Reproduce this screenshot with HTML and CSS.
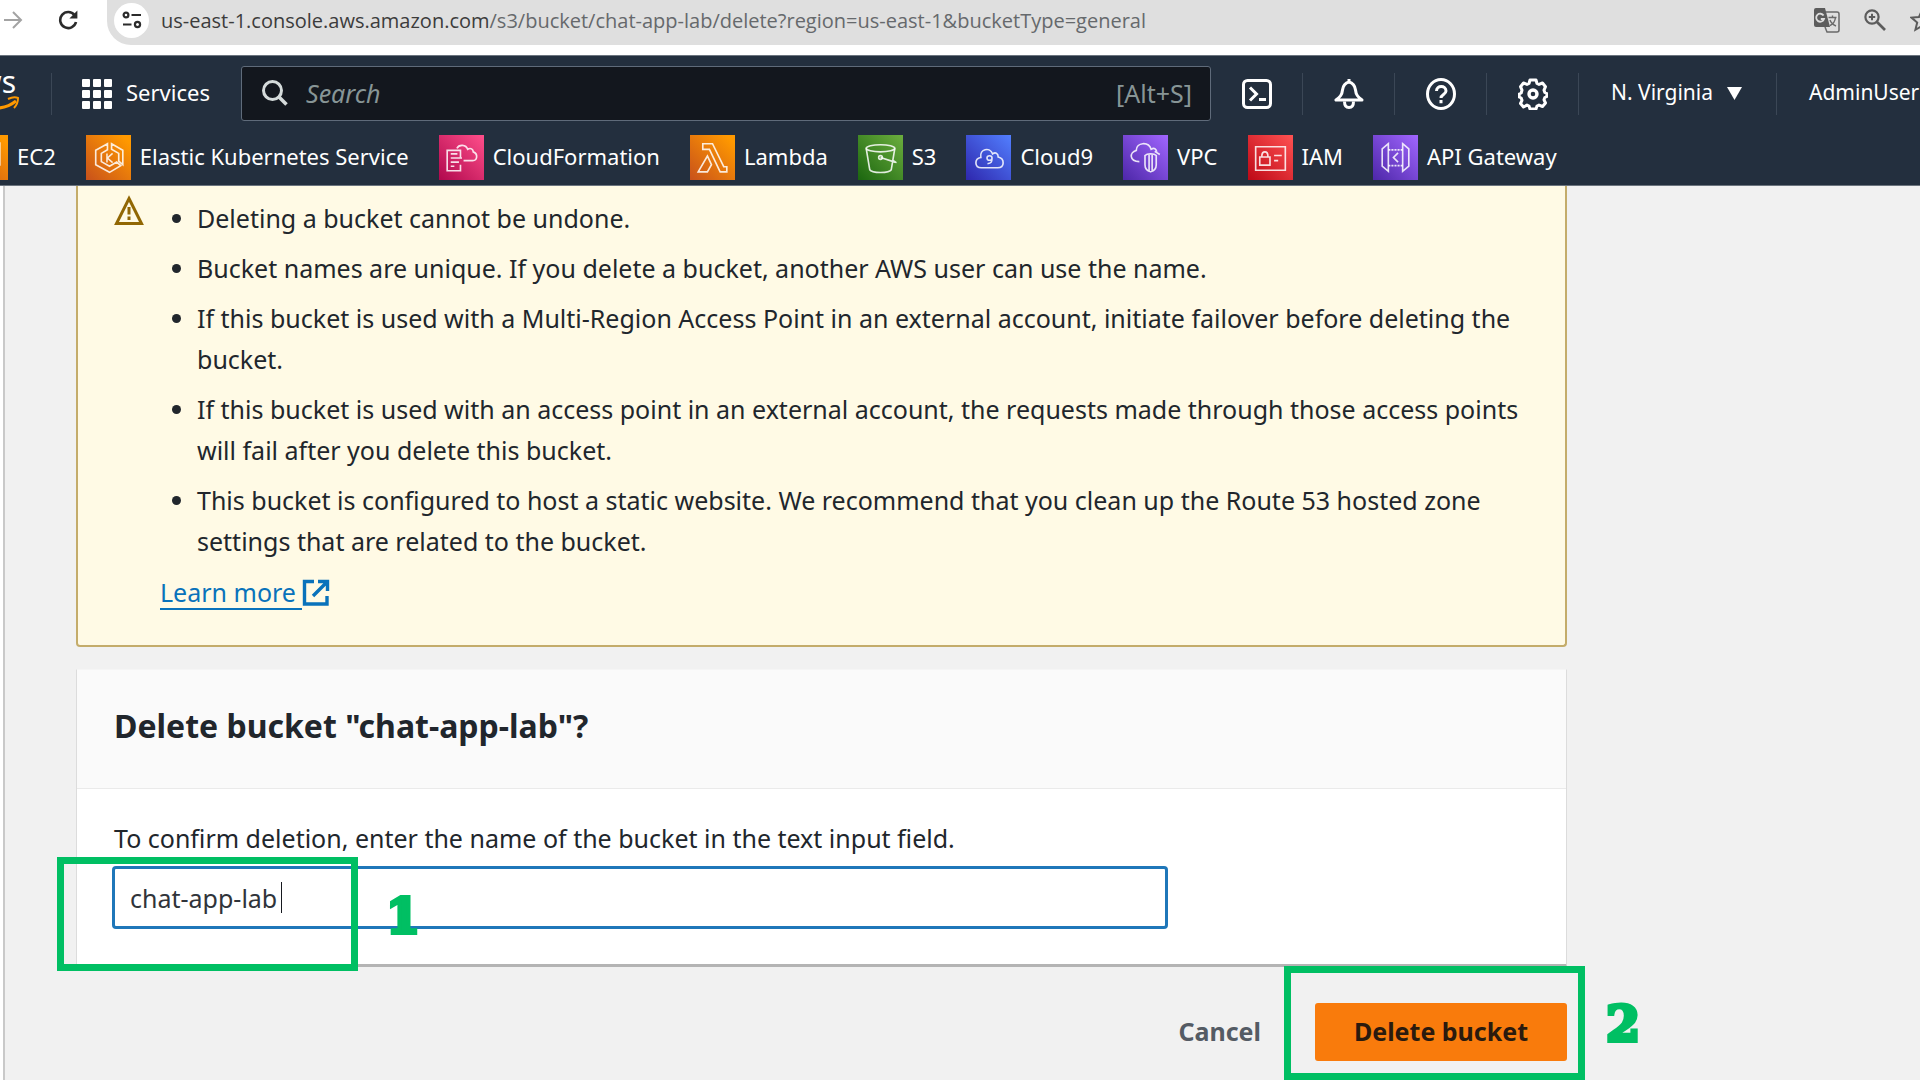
FILE: index.html
```
<!DOCTYPE html>
<html lang="en">
<head>
<meta charset="utf-8">
<title>Delete bucket - S3</title>
<link rel="stylesheet" href="styles.css">
</head>
<body>
<div class="browser-bar">
  <button class="browser-btn forward" aria-label="Forward">
    <svg width="20" height="20" viewBox="0 0 20 20" fill="none" stroke="#a3a3a3" stroke-width="2"><path d="M1 10h16M10 2l8 8-8 8"/></svg>
  </button>
  <button class="browser-btn reload" aria-label="Reload">
    <svg width="20" height="20" viewBox="0 0 20 20"><path d="M16.6 5.2A8 8 0 1 0 18 12" fill="none" stroke="#2b2b2b" stroke-width="2.6"/><path d="M19.4 0.600v8h-8z" fill="#2b2b2b"/></svg>
  </button>
  <div class="omnibox">
    <button class="site-info" aria-label="Site information">
      <svg width="20" height="18" viewBox="0 0 20 18" fill="none" stroke="#2b2b2b" stroke-width="2.200"><circle cx="4" cy="4" r="2.400"/><path d="M9.500 4H19M1 13.500h8.500"/><circle cx="15.500" cy="13.500" r="2.600"/></svg>
    </button>
    <div class="url"><span class="url-host">us-east-1.console.aws.amazon.com</span>/s3/bucket/chat-app-lab/delete?region=us-east-1&amp;bucketType=general</div>
    <div class="omnibox-tools">
      <button class="browser-btn" aria-label="Translate">
        <svg width="26" height="26" viewBox="0 0 26 26"><path d="M2 1h9l5 19H2a2 2 0 0 1-2-2V3a2 2 0 0 1 2-2z" fill="#5c5c5c"/><path d="M12 5h11a2 2 0 0 1 2 2v16a2 2 0 0 1-2 2H13l-2-5" fill="none" stroke="#6a6a6a" stroke-width="1.500"/><path d="M9.600 8.600A4 4 0 1 0 10 12H6.800" fill="none" stroke="#dedede" stroke-width="1.800"/><path d="M14.500 10.500h8M18.500 8.500v2M21.500 10.500c-.5 4-3 7-5.500 8M16 13c1 3 3.500 5 6 6" fill="none" stroke="#6a6a6a" stroke-width="1.400"/></svg>
      </button>
      <button class="browser-btn" aria-label="Zoom">
        <svg width="22" height="22" viewBox="0 0 22 22" fill="none" stroke="#5c5c5c"><circle cx="8" cy="8" r="6.600" stroke-width="2.200"/><path d="M13 13l8 8" stroke-width="2.600"/><path d="M8 4.800v6.400M4.800 8h6.400" stroke-width="2"/></svg>
      </button>
      <button class="browser-btn" aria-label="Bookmark">
        <svg width="24" height="24" viewBox="0 0 24 24" fill="none" stroke="#5c5c5c" stroke-width="2"><path d="M12 2l3 7 7.500.600-5.700 4.900 1.800 7.300L12 18l-6.600 3.800 1.800-7.300L1.500 9.600 9 9z"/></svg>
      </button>
    </div>
  </div>
</div>

<header class="nav">
  <div class="nav-main">
    <a class="logo" href="#" aria-label="AWS home">
      <svg width="20" height="40" viewBox="0 0 20 40"><text class="logo-text" x="16" y="20" text-anchor="end">aws</text><path d="M-20 30C-8 38 6 36 16 28" fill="none" stroke="#f90" stroke-width="3"/><path d="M8 26c4-2 8-2 10-1 0 3-1 7-4 10" fill="none" stroke="#f90" stroke-width="2"/></svg>
    </a>
    <button class="services">
      <svg width="30" height="30" viewBox="0 0 30 30" fill="#fff"><rect width="8" height="8" rx="1"/><rect x="11" width="8" height="8" rx="1"/><rect x="22" width="8" height="8" rx="1"/><rect y="11" width="8" height="8" rx="1"/><rect x="11" y="11" width="8" height="8" rx="1"/><rect x="22" y="11" width="8" height="8" rx="1"/><rect y="22" width="8" height="8" rx="1"/><rect x="11" y="22" width="8" height="8" rx="1"/><rect x="22" y="22" width="8" height="8" rx="1"/></svg>
      <span>Services</span>
    </button>
    <div class="search">
      <svg width="26" height="26" viewBox="0 0 26 26" fill="none" stroke="#d5dbdb" stroke-width="3"><circle cx="10.500" cy="10.500" r="9"/><path d="M17 17l7.500 7.500" stroke-width="3.600"/></svg>
      <input class="search-input" type="text" placeholder="Search" aria-label="Search">
      <span class="search-hint">[Alt+S]</span>
    </div>
    <button class="nav-tool" aria-label="CloudShell">
      <svg width="30" height="30" viewBox="0 0 30 30" fill="none" stroke="#fff" stroke-width="3"><rect x="1.500" y="1.500" width="27" height="27" rx="4"/><path d="M8 8.500l6.500 6.500L8 21.500M17 20.500h7"/></svg>
    </button>
    <button class="nav-tool" aria-label="Notifications">
      <svg width="30" height="32" viewBox="0 0 30 32" fill="none" stroke="#fff" stroke-width="3" stroke-linejoin="round"><path d="M15 4c-4 1-6 4-6.500 8-.5 5-2.500 7-6.500 10h26c-4-3-6-5-6.500-10-.5-4-2.500-7-6.500-8zM15 1v4"/><path d="M10.500 23.500c0 4 2 6 4.500 6s4.500-2 4.500-6"/></svg>
    </button>
    <button class="nav-tool" aria-label="Help">
      <svg width="30" height="32" viewBox="0 0 30 32" fill="none" stroke="#fff" stroke-width="3"><ellipse cx="15" cy="16" rx="13.500" ry="14.500"/><path d="M10.500 13c0-6 9.500-6 9.500 0 0 3.500-5 3.500-5 7M15 22v3.200"/></svg>
    </button>
    <button class="nav-tool" aria-label="Settings">
      <svg width="30" height="32" viewBox="0 0 30 32" fill="none" stroke="#fff" stroke-width="3" stroke-linejoin="round"><path d="M12 2h6l1 3.500 2 .9L24.500 5l3 3.700-1.500 3.500.8 2.300 2 1v3l-2 1-.8 2.300 1.500 3.200-3 3.500-3.500-1.400-2 .9-1 3h-6l-1-3-2-.9L5.500 29l-3-3.500L4 22.300 3.200 20l-2-1v-3l2-1 .8-2.800-1.500-3.500 3-3.700L9 6.400l2-.9z"/><circle cx="15" cy="16" r="4" stroke-width="3.400"/></svg>
    </button>
    <button class="nav-menu"><span>N. Virginia</span> <svg width="15" height="13" viewBox="0 0 15 13"><path d="M0 0h15l-7.500 13z" fill="#fff"/></svg></button>
    <button class="nav-menu user"><span>AdminUser</span></button>
  </div>
  <nav class="shortcuts">
    <a class="shortcut" href="#"><svg class="tile orange" viewBox="0 0 44 44"><path d="M8 14h22v22H8zM14 8h22v22"/></svg><span>EC2</span></a>
    <a class="shortcut" href="#"><svg class="tile orange" viewBox="0 0 44 44"><path d="M21 8.500L9.500 15v14L23 36.500 34 30l-4-3.500-7 4-8-4.500v-8l6-3.500zM25 8.500L36 15v14l-4-3.500V18l-7-4z"/><path d="M20.500 18v9M26 18l-5 4.500 5 4.500" stroke-width="1.500"/></svg><span>Elastic Kubernetes Service</span></a>
    <a class="shortcut" href="#"><svg class="tile pink" viewBox="0 0 44 44"><path d="M21 22v-7H8v20h13v-6"/><path d="M11.500 18.500H18M11.500 22.500h11M11.500 26.500h8M11.500 30.500H15"/><path d="M17.500 13c2-4 9-4 10.500 1 3-2 5.500 0 5.500 2.500 5 2 4 8.500-.5 8.500h-9"/></svg><span>CloudFormation</span></a>
    <a class="shortcut" href="#"><svg class="tile orange" viewBox="0 0 44 44"><path d="M12.500 8.500H22L33 31h3v5h-6.500L19 14h-6.500zM17 20.500l4 8.500-4 7H8z"/></svg><span>Lambda</span></a>
    <a class="shortcut" href="#"><svg class="tile green" viewBox="0 0 44 44"><ellipse cx="22" cy="13" rx="14" ry="3.500"/><path d="M8 13l3.500 21c2 3.500 19 3.500 21 0L36 13M22 22l14 4.500c2 .5 1 .5-1.500-1.500"/><circle cx="22" cy="22" r="1.800"/></svg><span>S3</span></a>
    <a class="shortcut" href="#"><svg class="tile blue" viewBox="0 0 44 44"><path d="M15 32h16c7 0 7-9 .5-10.500 0-4-3-5-5.500-3-2.500-7-13-5-11.500 3.500C8 23 8 32 15 32z"/><path d="M25.500 22.500c0 3-5 3-5 0s5-3 5 0c0 4-1 5-4.500 5.500" stroke-width="1.500"/></svg><span>Cloud9</span></a>
    <a class="shortcut" href="#"><svg class="tile purple" viewBox="0 0 44 44"><path d="M16 26c-10 0-10-9-3-11 0-8 12-9 14.500-1 3-2 5-.5 5.500 2.500M31 16l5 3"/><path d="M27 18.500c-3 0-5 1-5.500 1.500v9c0 4 2 6 5.500 7 3.500-1 5.500-3 5.500-7v-9c-.5-.5-2.500-1.500-5.500-1.500zM25.500 19v17M28.500 19v17"/></svg><span>VPC</span></a>
    <a class="shortcut" href="#"><svg class="tile red" viewBox="0 0 44 44"><path d="M7.500 11.500h29v23h-29zM11.500 21.500h10v8h-10zM13.500 21c0-6 6-6 6 0M25.500 20h7.500M25.500 25h4"/></svg><span>IAM</span></a>
    <a class="shortcut" href="#"><svg class="tile purple" viewBox="0 0 44 44"><path d="M15 8.500l-6 5v17l6 5zM29 8.500l6 5v17l-6 5zM24.500 17.500L20 22l4.500 4.500"/><path d="M15 14.500h14M15 30h14" stroke-dasharray="2 1"/></svg><span>API Gateway</span></a>
  </nav>
</header>

<main class="page">
  <section class="alert">
    <svg class="alert-icon" width="30" height="31" viewBox="0 0 30 31" fill="none" stroke="#916704" stroke-width="3"><path d="M15 3.500L27.500 28.500h-25z"/><path d="M15 12v7.500M15 21.500v3.500"/></svg>
    <div class="alert-body">
      <ul class="alert-list">
        <li>Deleting a bucket cannot be undone.</li>
        <li>Bucket names are unique. If you delete a bucket, another AWS user can use the name.</li>
        <li>If this bucket is used with a Multi-Region Access Point in an external account, initiate failover before deleting the bucket.</li>
        <li>If this bucket is used with an access point in an external account, the requests made through those access points will fail after you delete this bucket.</li>
        <li>This bucket is configured to host a static website. We recommend that you clean up the Route 53 hosted zone settings that are related to the bucket.</li>
      </ul>
      <a class="learn-more" href="#"><span>Learn more&nbsp;</span><svg width="28" height="28" viewBox="0 0 28 28" fill="none" stroke="#0972bb" stroke-width="3.400"><path d="M12 2.500H2.500v22.500h22.500V17M16 2.500h9.500V12M25 3L11 17"/></svg></a>
    </div>
  </section>

  <form class="card">
    <h2 class="card-title">Delete bucket "chat-app-lab"?</h2>
    <div class="card-body">
      <label class="field-label" for="bucket-name">To confirm deletion, enter the name of the bucket in the text input field.</label>
      <div class="field">
        <input class="field-input" id="bucket-name" type="text" value="chat-app-lab">
        <span class="caret"></span>
        <span class="callout callout-1"></span>
        <span class="step step-1">1</span>
      </div>
    </div>
  </form>

  <div class="actions">
    <button class="btn-link">Cancel</button>
    <div class="primary-wrap">
      <button class="btn-primary">Delete bucket</button>
      <span class="callout callout-2"></span>
      <span class="step step-2">2</span>
    </div>
  </div>
</main>
</body>
</html>
```
FILE: styles.css
```
* { box-sizing: border-box; }

body {
  margin: 0;
  min-height: 100vh;
  display: flex;
  flex-direction: column;
  overflow: hidden;
  background: #f1f1f1;
  color: #21262c;
  font-family: "Noto Sans", "Open Sans", sans-serif;
  font-size: 25px;
}

button {
  padding: 0;
  border: 0;
  background: none;
  color: inherit;
  font: inherit;
  white-space: nowrap;
}

svg { display: block; flex: none; }

/* Browser toolbar */
.browser-bar {
  display: flex;
  align-items: flex-start;
  height: 55px;
  padding-left: 3px;
  background: #fff;
}

.browser-btn { display: flex; align-items: center; height: 40px; }
.reload { margin: 0 29px 0 35px; }

.omnibox {
  flex: 1;
  min-width: 0;
  display: flex;
  align-items: center;
  height: 45px;
  padding: 0 0 5px 7px;
  border-bottom-left-radius: 24px;
  background: #dfdfdf;
}

.site-info {
  display: flex;
  align-items: center;
  justify-content: center;
  width: 35px;
  height: 35px;
  border-radius: 50%;
  background: #fff;
}

.url {
  flex: 1;
  margin-left: 12px;
  color: #66696c;
  font-family: "Open Sans", sans-serif;
  font-size: 20px;
  white-space: nowrap;
}

.url-host { color: #3c3c3c; }

.omnibox-tools { display: flex; gap: 24px; margin-right: -14px; }

/* Console navigation */
.nav {
  height: 131px;
  border-top: 1px solid #6b747e;
  border-bottom: 1px solid #6b747e;
  background: #232f3e;
  color: #fff;
  font-size: 22px;
}

.nav-main { display: flex; align-items: center; height: 75px; }

.logo {
  width: 52px;
  height: 42px;
  border-right: 1px solid #3b4756;
}

.logo-text { fill: #fff; font-size: 30px; }

.services {
  display: flex;
  align-items: center;
  gap: 14px;
  width: 189px;
  padding-left: 30px;
}

.services span,
.nav-menu span,
.shortcut span { padding-bottom: 3px; }

.search {
  flex: 1;
  min-width: 0;
  display: flex;
  align-items: center;
  gap: 18px;
  height: 55px;
  padding: 0 18px 2px 20px;
  border: 1px solid #5f6b7a;
  border-radius: 3px;
  background: #13171e;
}

.search-input {
  flex: 1;
  min-width: 0;
  padding: 0;
  border: 0;
  background: none;
  color: #fff;
  font: inherit;
  font-size: 25px;
}

.search-input::placeholder { color: #879596; font-style: italic; opacity: 1; }
.search-hint { color: #879596; font-size: 25px; }

.nav-tool {
  display: flex;
  align-items: center;
  justify-content: center;
  width: 92px;
  height: 42px;
  border-right: 1px solid #3b4756;
}

.nav-menu {
  display: flex;
  align-items: center;
  justify-content: space-between;
  width: 198px;
  height: 42px;
  padding: 0 34px 0 32px;
  border-right: 1px solid #3b4756;
  font-size: 21px;
}

.user { width: 143px; padding-right: 0; border: 0; overflow: hidden; }

.shortcuts { display: flex; gap: 30px; padding-top: 4px; margin-left: -37px; }

.shortcut {
  display: flex;
  align-items: center;
  gap: 9px;
  color: #fff;
  text-decoration: none;
  white-space: nowrap;
}

.tile {
  width: 45px;
  height: 45px;
  fill: none;
  stroke: #fff;
  stroke-opacity: 0.85;
  stroke-width: 1.6;
}

.orange { background: linear-gradient(45deg, #c8511b, #f90 90%); }
.pink { background: linear-gradient(45deg, #b0084d, #ff4f8b); }
.green { background: linear-gradient(45deg, #1b660f, #6cae3e); }
.blue { background: linear-gradient(45deg, #2e27ad, #527fff); }
.purple { background: linear-gradient(45deg, #4d27a8, #a166ff); }
.red { background: linear-gradient(45deg, #bd0816, #ff5252); }

/* Page */
.page {
  flex: 1;
  padding-left: 73px;
  border-left: 3px solid #fff;
  box-shadow: inset 2px 0 0 #c9c9c9;
}

.alert,
.card,
.actions { max-width: 1491px; }

.alert {
  display: flex;
  gap: 16px;
  padding: 9px 36px 32px;
  border: 2px solid #c4ac6a;
  border-top: 0;
  border-radius: 0 0 4px 4px;
  background: #fffae5;
}

.alert-body { padding-top: 3px; line-height: 41px; }

.alert-list {
  display: grid;
  gap: 9px;
  margin: 0 0 10px;
  padding-left: 37px;
}

.learn-more {
  display: flex;
  align-items: center;
  height: 41px;
  color: #0972bb;
  text-decoration: none;
}

.learn-more span { border-bottom: 2px solid #0972bb; line-height: 32px; }

.card {
  margin-top: 22px;
  border: 1px solid #dcdcdc;
  border-top-color: #f5f5f5;
  border-bottom: 3px solid #b4b4b4;
  background: #fff;
}

.card-title {
  margin: 0;
  padding: 36px 37px 42px;
  border-bottom: 1px solid #eaeaea;
  background: #fafafa;
  font-size: 32px;
  line-height: 40px;
}

.card-body { padding: 29px 35px 35px; }

.field-label { display: block; padding-left: 2px; line-height: 41px; }

.field { position: relative; max-width: 1056px; margin-top: 7px; }

.field-input {
  display: block;
  width: 100%;
  height: 63px;
  padding: 0 15px;
  border: 3px solid #1f77b9;
  border-radius: 4px;
  background: #fff;
  color: #30343a;
  font: inherit;
  outline: 0;
}

.caret {
  position: absolute;
  top: 16px;
  left: 169px;
  width: 1px;
  height: 31px;
  background: #16191f;
}

.actions {
  display: flex;
  align-items: center;
  justify-content: flex-end;
  gap: 54px;
  padding-top: 36px;
  font-weight: 700;
}

.btn-link { padding-bottom: 3px; color: #545b64; }

.primary-wrap { position: relative; }

.btn-primary {
  width: 252px;
  height: 58px;
  padding-bottom: 3px;
  border-radius: 3px;
  background: #f97b0c;
  color: #2b1a0e;
}

/* Numbered step callouts laid over the page */
.callout {
  position: absolute;
  width: 301px;
  height: 114px;
  border: 7px solid #00bf63;
  pointer-events: none;
}

.callout-1 { top: -9px; left: -55px; }
.callout-2 { top: -37px; left: -31px; }

.step {
  position: absolute;
  color: #00bf63;
  font-family: "DejaVu Serif", serif;
  font-size: 49px;
  font-weight: 700;
  line-height: 50px;
  -webkit-text-stroke: 4px #00bf63;
}

.step-1 { top: 25px; left: 274px; }
.step-2 { top: -4px; left: 291px; }
```
